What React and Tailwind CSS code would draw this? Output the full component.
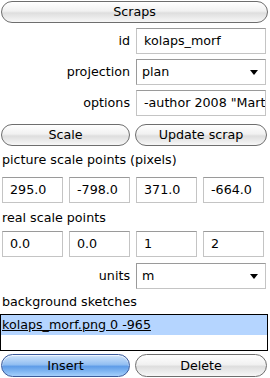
import React from "react";

const font = { fontFamily: '"DejaVu Sans", "Lucida Grande", sans-serif' };

function PillButton({ children, blue, className = "" }) {
  return (
    <button
      className={
        "h-[22px] rounded-full border text-[12.7px] text-black flex items-center justify-center " +
        (blue
          ? "border-[#3b5a9a] bg-[linear-gradient(#cfe4fb_0%,#93bff2_45%,#5f9de8_55%,#a4cffb_100%)] shadow-[inset_0_1px_1px_rgba(255,255,255,0.8)] "
          : "border-[#6e6e6e] bg-[linear-gradient(#ffffff_0%,#f1f1f1_45%,#dedede_55%,#f7f7f7_100%)] ") +
        className
      }
    >
      {children}
    </button>
  );
}

function TextBox({ value, className = "" }) {
  return (
    <div
      className={
        "h-[26px] border border-[#c4c4c4] border-t-[#9a9a9a] bg-white flex items-center pl-[7px] overflow-hidden whitespace-nowrap text-[12.7px] text-black " +
        className
      }
    >
      {value}
    </div>
  );
}

function SelectBox({ value }) {
  return (
    <div className="h-[26px] border border-[#c4c4c4] border-l-[#9a9a9a] border-t-[#9a9a9a] bg-white flex items-center justify-between pl-[5px] pr-[7px] text-[12.7px] text-black">
      <span>{value}</span>
      <span className="w-0 h-0 border-l-[4px] border-r-[4px] border-t-[5px] border-l-transparent border-r-transparent border-t-black" />
    </div>
  );
}

function Row({ label, children }) {
  return (
    <div className="grid grid-cols-[130px_130px] gap-x-[6px] items-center">
      <span className="text-right text-[12.7px] text-black">{label}</span>
      {children}
    </div>
  );
}

export default function App() {
  const pic = ["295.0", "-798.0", "371.0", "-664.0"];
  const real = ["0.0", "0.0", "1", "2"];

  return (
    <div style={font} className="w-[270px] h-[378px] bg-white overflow-hidden">
      <div className="pt-[1px] px-[1px]">
        <PillButton className="w-[267px]">Scraps</PillButton>
      </div>

      <div className="flex flex-col gap-[5px] mt-[5px]">
        <Row label="id">
          <TextBox value="kolaps_morf" />
        </Row>
        <Row label="projection">
          <SelectBox value="plan" />
        </Row>
        <Row label="options">
          <TextBox value={'-author 2008 "Mart'} />
        </Row>
      </div>

      <div className="flex gap-[5px] px-[1px] mt-[8px]">
        <PillButton className="w-[129px]">Scale</PillButton>
        <PillButton className="w-[132px]">Update scrap</PillButton>
      </div>

      <div className="text-[12.7px] text-black pl-[2px] mt-[4px] h-[20px] leading-[20px]">
        picture scale points (pixels)
      </div>
      <div className="grid grid-cols-[61px_61px_61px_61px] gap-x-[6px] pl-[2px] mt-[7px]">
        {pic.map((v, i) => (
          <TextBox key={i} value={v} />
        ))}
      </div>

      <div className="text-[12.7px] text-black pl-[2px] mt-[5px] h-[20px] leading-[20px]">
        real scale points
      </div>
      <div className="grid grid-cols-[61px_61px_61px_61px] gap-x-[6px] pl-[2px] mt-[3px]">
        {real.map((v, i) => (
          <TextBox key={i} value={v} />
        ))}
      </div>

      <div className="mt-[6px]">
        <Row label="units">
          <SelectBox value="m" />
        </Row>
      </div>

      <div className="text-[12.7px] text-black pl-[2px] mt-[2px] h-[22px] leading-[22px]">
        background sketches
      </div>
      <div className="border border-black h-[37px] w-[268px] mt-[1px] bg-white">
        <div className="bg-[#b5d5ff] h-[20px] leading-[20px] text-[12.7px] text-black underline pl-[1px]">
          kolaps_morf.png 0 -965
        </div>
      </div>

      <div className="flex gap-[5px] px-[1px] mt-[3px]">
        <PillButton blue className="w-[129px] h-[23px]">Insert</PillButton>
        <PillButton className="w-[132px] h-[23px]">Delete</PillButton>
      </div>
    </div>
  );
}
